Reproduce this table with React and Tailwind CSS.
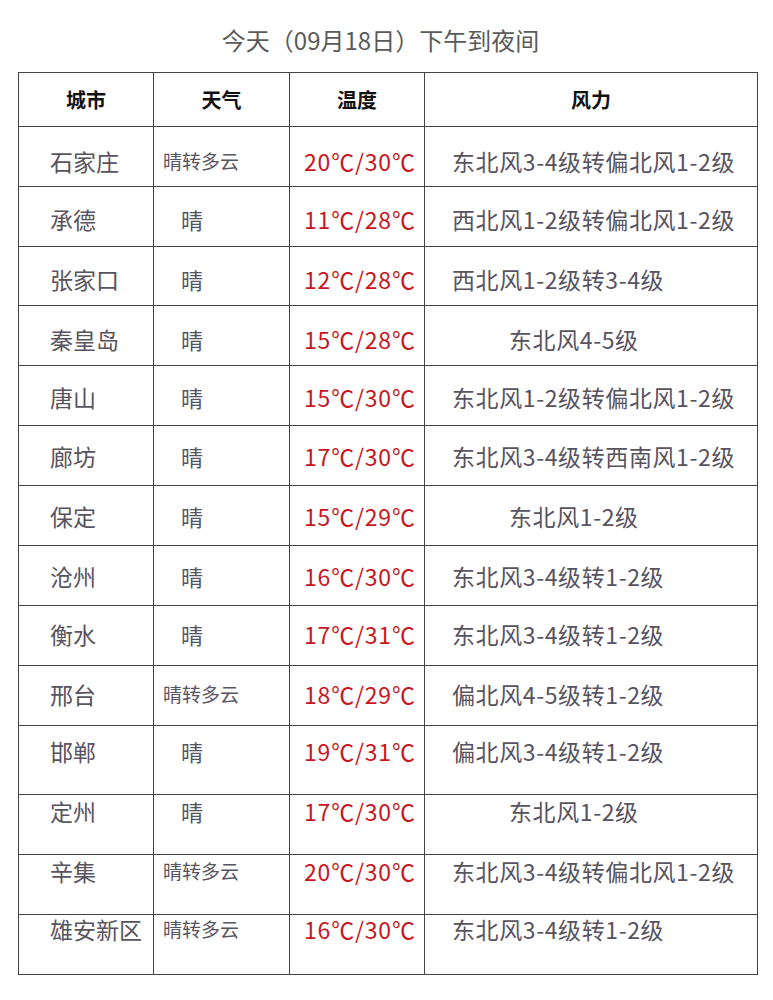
import React from "react";

const rows = [
  { city: "石家庄", wx: "晴转多云", t: "20℃/30℃", wind: "东北风3-4级转偏北风1-2级", h: "h-[60px]", pt: "pt-[20px]", wp: "pl-[27px]" },
  { city: "承德", wx: "晴", t: "11℃/28℃", wind: "西北风1-2级转偏北风1-2级", h: "h-[60px]", pt: "pt-[18px]", wp: "pl-[27px]" },
  { city: "张家口", wx: "晴", t: "12℃/28℃", wind: "西北风1-2级转3-4级", h: "h-[59px]", pt: "pt-[18px]", wp: "pl-[27px]" },
  { city: "秦皇岛", wx: "晴", t: "15℃/28℃", wind: "东北风4-5级", h: "h-[60px]", pt: "pt-[19px]", wp: "pl-[84px]" },
  { city: "唐山", wx: "晴", t: "15℃/30℃", wind: "东北风1-2级转偏北风1-2级", h: "h-[60px]", pt: "pt-[17px]", wp: "pl-[27px]" },
  { city: "廊坊", wx: "晴", t: "17℃/30℃", wind: "东北风3-4级转西南风1-2级", h: "h-[60px]", pt: "pt-[16px]", wp: "pl-[27px]" },
  { city: "保定", wx: "晴", t: "15℃/29℃", wind: "东北风1-2级", h: "h-[60px]", pt: "pt-[16px]", wp: "pl-[84px]" },
  { city: "沧州", wx: "晴", t: "16℃/30℃", wind: "东北风3-4级转1-2级", h: "h-[60px]", pt: "pt-[16px]", wp: "pl-[27px]" },
  { city: "衡水", wx: "晴", t: "17℃/31℃", wind: "东北风3-4级转1-2级", h: "h-[60px]", pt: "pt-[14px]", wp: "pl-[27px]" },
  { city: "邢台", wx: "晴转多云", t: "18℃/29℃", wind: "偏北风4-5级转1-2级", h: "h-[60px]", pt: "pt-[14px]", wp: "pl-[27px]" },
  { city: "邯郸", wx: "晴", t: "19℃/31℃", wind: "偏北风3-4级转1-2级", h: "h-[69px]", pt: "pt-[11px]", wp: "pl-[27px]" },
  { city: "定州", wx: "晴", t: "17℃/30℃", wind: "东北风1-2级", h: "h-[60px]", pt: "pt-[2px]", wp: "pl-[84px]" },
  { city: "辛集", wx: "晴转多云", t: "20℃/30℃", wind: "东北风3-4级转偏北风1-2级", h: "h-[60px]", pt: "pt-[2px]", wp: "pl-[27px]" },
  { city: "雄安新区", wx: "晴转多云", t: "16℃/30℃", wind: "东北风3-4级转1-2级", h: "h-[60px]", pt: "pt-[0px]", wp: "pl-[27px]" },
];

const font = { fontFamily: '"Noto Sans CJK SC", "Noto Sans", sans-serif' };

export default function App() {
  return (
    <div className="w-[773px] h-[1000px] bg-white text-[#57535f]" style={font}>
      <div className="pt-[24px] h-[72px] text-center text-[24px] leading-[32px] text-[#5a5a5a] pr-[12px]">
        今天（09月18日）下午到夜间
      </div>
      <table className="ml-[18px] w-[739px] table-fixed border-collapse border border-[#555]">
        <colgroup>
          <col className="w-[135px]" />
          <col className="w-[136px]" />
          <col className="w-[135px]" />
          <col className="w-[333px]" />
        </colgroup>
        <thead>
          <tr className="h-[54px] text-[20px] font-bold text-[#111]">
            <th className="border-[1.5px] border-[#444] text-center align-middle">城市</th>
            <th className="border-[1.5px] border-[#444] text-center align-middle">天气</th>
            <th className="border-[1.5px] border-[#444] text-center align-middle">温度</th>
            <th className="border-[1.5px] border-[#444] text-center align-middle">风力</th>
          </tr>
        </thead>
        <tbody>
          {rows.map((r) => (
            <tr key={r.city} className={r.h}>
              <td className={`border-[1.5px] border-[#444] align-top leading-[28px] text-[23px] pl-[31px] whitespace-nowrap ${r.pt}`}>
                {r.city}
              </td>
              <td
                className={`border-[1.5px] border-[#444] align-top leading-[28px] whitespace-nowrap ${r.pt} ${
                  r.wx === "晴" ? "text-[22px] pl-[27px]" : "text-[19px] pl-[9px]"
                }`}
              >
                {r.wx}
              </td>
              <td className={`border-[1.5px] border-[#444] align-top leading-[28px] text-[23px] tracking-[0.8px] pl-[14px] text-[#c8161e] whitespace-nowrap ${r.pt}`}>
                {r.t}
              </td>
              <td className={`border-[1.5px] border-[#444] align-top leading-[28px] text-[23px] tracking-[0.6px] whitespace-nowrap ${r.pt} ${r.wp}`}>
                {r.wind}
              </td>
            </tr>
          ))}
        </tbody>
      </table>
    </div>
  );
}
